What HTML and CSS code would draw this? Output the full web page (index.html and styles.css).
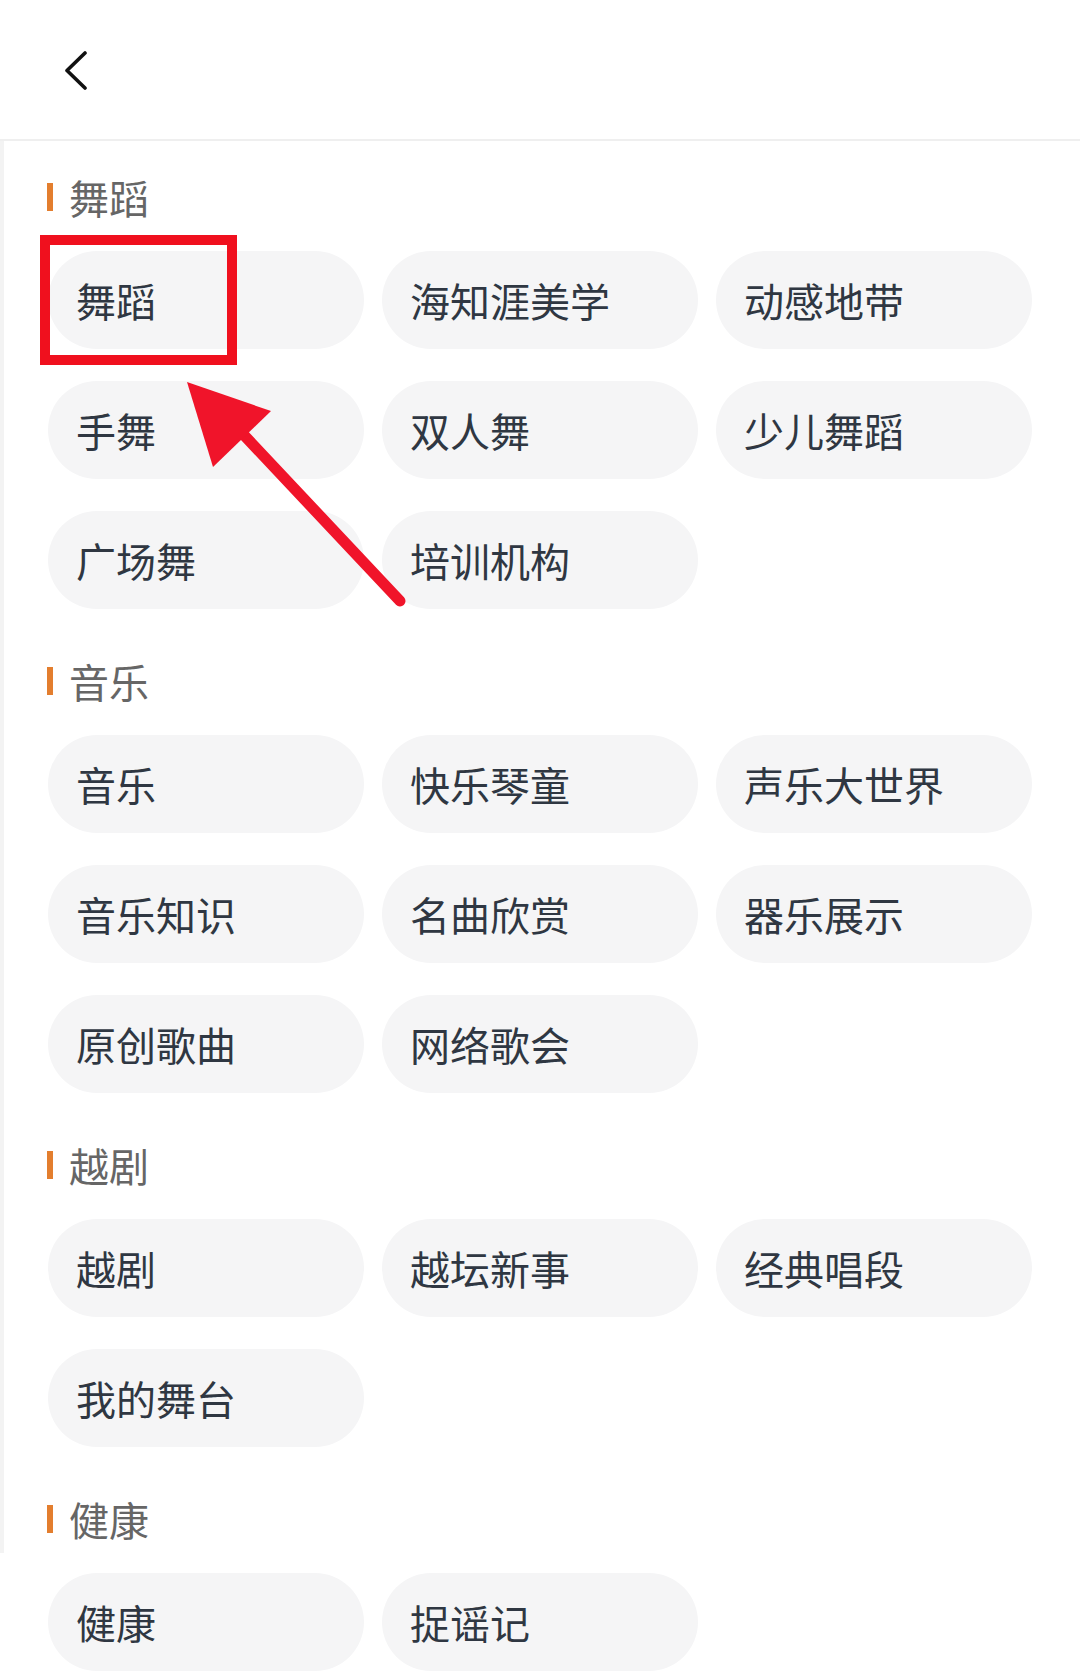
FILE: index.html
```html
<!DOCTYPE html>
<html lang="zh-CN">
<head>
    <meta charset="UTF-8">
    <meta name="viewport" content="width=device-width, initial-scale=1.0">
    <title>分类</title>
    <link rel="stylesheet" href="styles.css">
</head>
<body>
<div class="page">

    <header class="top-bar">
        <a class="back" href="#">
            <svg width="24" height="40" viewBox="0 0 24 40">
                <path d="M20 2 L2 19.5 L20 37" fill="none" stroke="#111" stroke-width="3.6" stroke-linecap="round" stroke-linejoin="round"/>
            </svg>
        </a>
    </header>

    <main class="content">
        <section class="group">
            <h2 class="group-title">舞蹈</h2>
            <div class="tags">
                <a class="tag" href="#">舞蹈</a>
                <a class="tag" href="#">海知涯美学</a>
                <a class="tag" href="#">动感地带</a>
                <a class="tag" href="#">手舞</a>
                <a class="tag" href="#">双人舞</a>
                <a class="tag" href="#">少儿舞蹈</a>
                <a class="tag" href="#">广场舞</a>
                <a class="tag" href="#">培训机构</a>
            </div>
        </section>

        <section class="group">
            <h2 class="group-title">音乐</h2>
            <div class="tags">
                <a class="tag" href="#">音乐</a>
                <a class="tag" href="#">快乐琴童</a>
                <a class="tag" href="#">声乐大世界</a>
                <a class="tag" href="#">音乐知识</a>
                <a class="tag" href="#">名曲欣赏</a>
                <a class="tag" href="#">器乐展示</a>
                <a class="tag" href="#">原创歌曲</a>
                <a class="tag" href="#">网络歌会</a>
            </div>
        </section>

        <section class="group">
            <h2 class="group-title">越剧</h2>
            <div class="tags">
                <a class="tag" href="#">越剧</a>
                <a class="tag" href="#">越坛新事</a>
                <a class="tag" href="#">经典唱段</a>
                <a class="tag" href="#">我的舞台</a>
            </div>
        </section>

        <section class="group">
            <h2 class="group-title">健康</h2>
            <div class="tags">
                <a class="tag" href="#">健康</a>
                <a class="tag" href="#">捉谣记</a>
            </div>
        </section>
    </main>

    <!-- annotation drawn over the screenshot -->
    <div class="mark-box"></div>
    <svg class="mark-arrow" width="1080" height="700" viewBox="0 0 1080 700">
        <line x1="400" y1="601" x2="226" y2="416" stroke="#f0142a" stroke-width="11" stroke-linecap="round"/>
        <polygon points="187,382 271,411 213,467" fill="#f0142a"/>
    </svg>

</div>
</body>
</html>
```

FILE: styles.css
```css
body {
    margin: 0;
    padding: 0;
    background-color: #fff;
    font-family: "Noto Sans CJK SC", "Noto Sans", sans-serif;
    color: #2f3742;
}

.page {
    position: relative;
    width: 1080px;
    height: 1672px;
    overflow: hidden;
}

.page::before {
    content: "";
    position: absolute;
    left: 0;
    top: 141px;
    width: 4px;
    height: 1412px;
    background-color: #f3f3f3;
}

.top-bar {
    height: 139px;
    border-bottom: 2px solid #efefef;
    display: flex;
    align-items: center;
    padding-left: 65px;
}

.back {
    display: block;
    width: 24px;
    height: 40px;
    margin-top: 2px;
}

.back svg {
    display: block;
}

.content {
    padding: 28px 48px 0 48px;
}

.group {
    margin-bottom: 44px;
}

.group-title {
    display: flex;
    align-items: center;
    margin: 0 0 26px 0;
    height: 56px;
    font-size: 40px;
    font-weight: normal;
    color: #666;
}

.group-title::before {
    content: "";
    width: 6px;
    height: 28px;
    margin-left: -1px;
    margin-right: 16px;
    background-color: #e37e2e;
}

.tags {
    display: grid;
    grid-template-columns: repeat(3, 1fr);
    column-gap: 18px;
    row-gap: 32px;
}

.tag {
    display: flex;
    align-items: center;
    height: 98px;
    padding-left: 28px;
    border-radius: 49px;
    background-color: #f5f5f6;
    color: #2f3742;
    font-size: 40px;
    text-decoration: none;
}

.mark-box {
    position: absolute;
    left: 40px;
    top: 235px;
    width: 177px;
    height: 110px;
    border: 10px solid #f0101e;
}

.mark-arrow {
    position: absolute;
    left: 0;
    top: 0;
    pointer-events: none;
}
```
